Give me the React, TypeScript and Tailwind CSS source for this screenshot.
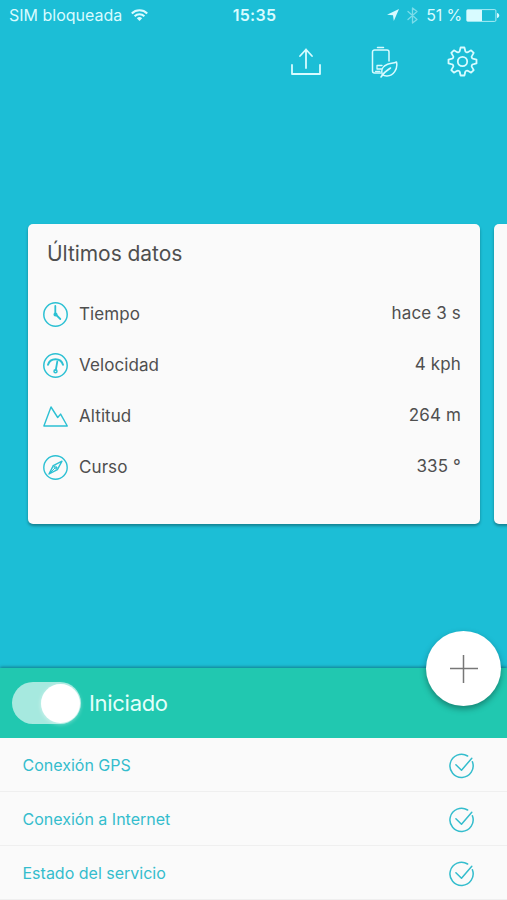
import type { ReactNode } from "react";

interface Reading {
  label: string;
  value: string;
  icon: ReactNode;
}

const stroke = {
  fill: "none",
  stroke: "currentColor",
  strokeLinecap: "round",
  strokeLinejoin: "round",
} as const;

function WifiIcon() {
  return (
    <svg width="17" height="12" viewBox="0 0 17 12" fill="none" stroke="currentColor" strokeWidth="2.1">
      <path d="M.8 4.4a10.9 10.9 0 0 1 15.4 0" />
      <path d="M3.6 7.3a7 7 0 0 1 9.8 0" />
      <path d="M8.5 12 5.8 9.3a3.8 3.8 0 0 1 5.4 0Z" fill="currentColor" stroke="none" />
    </svg>
  );
}

function LocationIcon() {
  return (
    <svg width="12" height="12" viewBox="0 0 12 12" fill="currentColor">
      <path d="M12 0 6.8 12 6 6.2 0 5.7Z" />
    </svg>
  );
}

function BluetoothIcon() {
  return (
    <svg width="11" height="17" viewBox="0 0 11 17" {...stroke} strokeWidth="1.3">
      <path d="m1 4.5 9 8L5.5 16V1L10 4.5l-9 8" />
    </svg>
  );
}

function BatteryIcon() {
  return (
    <svg width="34" height="13" viewBox="0 0 34 13" fill="none">
      <rect x=".6" y=".6" width="29.3" height="11.8" rx="1.2" stroke="currentColor" strokeOpacity=".75" />
      <path d="M1 1h15v11H1z" fill="currentColor" />
      <path d="M31 4c3 .5 3 4.5 0 5Z" fill="currentColor" />
    </svg>
  );
}

function UploadIcon() {
  return (
    <svg width="30" height="28" viewBox="0 0 30 28" {...stroke} strokeWidth="1.8">
      <path d="M1 17v9h28v-9" />
      <path d="M15 20V1.5M9 8l6-6.5L21 8" />
    </svg>
  );
}

function EcoIcon() {
  return (
    <svg width="27" height="32" viewBox="0 0 27 32" {...stroke} strokeWidth="1.5">
      <path d="M6.5 1.5h6" />
      <path d="M9.5 27h-6a2 2 0 0 1-2-2V6a2 2 0 0 1 2-2H16a2 2 0 0 1 2 2v9" />
      <path d="M11 19.5H6V23h4.500M4.500 25.300H9" strokeWidth="1.3" />
      <path d="M11.300 28.500c-1.500-4.500.5-8.500 5.300-10.300 3-1.200 6-.6 8.900-2.200 1.600 7-3.200 14.200-9.700 14-1.800-.1-3.300-.5-4.500-1.500Z" />
      <path d="M10 31c2.500-4 5.500-6.500 9.500-9" />
    </svg>
  );
}

function GearIcon() {
  return (
    <svg width="31" height="31" viewBox="-15.5 -15.5 31 31" {...stroke} strokeWidth="1.8">
      <path d="M-2.6-11.2-1.9-14H1.900L2.600-11.2A2 2 0 0 0 6.1-9.800L8.600-11.2 11.200-8.600 9.800-6.100A2 2 0 0 0 11.200-2.600L14-1.900V1.900L11.200 2.600A2 2 0 0 0 9.800 6.100L11.200 8.600 8.600 11.200 6.100 9.800A2 2 0 0 0 2.600 11.200L1.900 14H-1.900L-2.600 11.200A2 2 0 0 0-6.100 9.800L-8.600 11.200-11.200 8.600-9.800 6.100A2 2 0 0 0-11.200 2.600L-14 1.900V-1.900L-11.200-2.600A2 2 0 0 0-9.800-6.100L-11.200-8.600-8.600-11.200-6.100-9.800A2 2 0 0 0-2.600-11.2Z" />
      <circle r="4.7" />
    </svg>
  );
}

function ClockIcon() {
  return (
    <svg width="26" height="26" viewBox="0 0 26 26" {...stroke} strokeWidth="1.5">
      <circle cx="12.5" cy="12.5" r="11.7" />
      <path d="M12.3 4v8l5 5" strokeWidth="1.8" />
      <circle cx="12.5" cy="12.5" r="1.3" />
    </svg>
  );
}

function SpeedIcon() {
  return (
    <svg width="26" height="26" viewBox="0 0 26 26" {...stroke} strokeWidth="1.5">
      <circle cx="12.5" cy="12.5" r="11.7" />
      <path d="M5 11.8a7.8 7.8 0 0 1 15 0" strokeWidth="2" />
      <path d="m14.3 8.500-1.500 8.500" strokeWidth="1.8" />
      <circle cx="12.5" cy="18.2" r="1.5" />
    </svg>
  );
}

function MountainIcon() {
  return (
    <svg width="26" height="26" viewBox="0 0 26 26" {...stroke} strokeWidth="1.4">
      <path d="M.9 22 8 3l6.700 10.500 2.900-3.400L24.300 22Z" />
    </svg>
  );
}

function CompassIcon() {
  return (
    <svg width="26" height="26" viewBox="0 0 26 26" {...stroke} strokeWidth="1.4">
      <circle cx="12.5" cy="12.5" r="11.7" />
      <path d="m19 6.200-4.600 8.500-8.300 4.200 4.200-8.300Z" />
      <path d="m10.300 10.600 4.100 4.100M6.100 18.900l6-6" strokeWidth="1" />
      <circle cx="12.5" cy="12.5" r="1.3" strokeWidth="1" />
    </svg>
  );
}

function CheckIcon() {
  return (
    <svg width="26" height="26" viewBox="0 0 26 26" {...stroke} strokeWidth="1.5">
      <path d="M18.600 3A11.600 11.600 0 1 0 23.400 8.800" />
      <path d="m6.900 11.700 5.600 5.600L22.800 5.200" />
    </svg>
  );
}

const readings: Reading[] = [
  { label: "Tiempo", value: "hace 3 s", icon: <ClockIcon /> },
  { label: "Velocidad", value: "4 kph", icon: <SpeedIcon /> },
  { label: "Altitud", value: "264 m", icon: <MountainIcon /> },
  { label: "Curso", value: "335 °", icon: <CompassIcon /> },
];

const services = ["Conexión GPS", "Conexión a Internet", "Estado del servicio"];

function StatusBar() {
  return (
    <div className="grid h-[30px] grid-cols-3 items-center pr-[7px] pl-[9px] text-[16px] text-[#d8fbff]">
      <div className="flex items-center gap-[9px]">
        <span className="whitespace-nowrap">SIM bloqueada</span>
        <WifiIcon />
      </div>
      <span className="text-center font-semibold tracking-[0.3px]">15:35</span>
      <div className="flex items-center justify-end">
        <LocationIcon />
        <span className="mr-[8px] ml-[8px] opacity-50">
          <BluetoothIcon />
        </span>
        <span className="mr-[4px] tracking-[-0.2px] whitespace-nowrap">51 %</span>
        <BatteryIcon />
      </div>
    </div>
  );
}

function ReadingsCard() {
  return (
    <section className="h-[300px] w-[452px] shrink-0 rounded-[5px] bg-[#fafafa] pr-[19px] pl-[15px] text-[#4f4f4f] shadow-[0_2px_3px_rgba(0,0,0,0.32)]">
      <h2 className="h-[65px] pt-[14px] pl-[4px] text-[21px] leading-[32px] tracking-[-0.05px]">Últimos datos</h2>
      <ul>
        {readings.map((reading) => (
          <li key={reading.label} className="flex h-[51px] items-center text-[17px]">
            <span className="text-[#2cc0d3]">{reading.icon}</span>
            <span className="ml-[10px] flex-1 tracking-[0.08px]">{reading.label}</span>
            <span className="pb-[2px] tracking-[0.15px]">{reading.value}</span>
          </li>
        ))}
      </ul>
    </section>
  );
}

export default function App() {
  return (
    <div className="flex h-[900px] w-[507px] flex-col overflow-hidden bg-[#1cbed6] font-['Inter','Liberation_Sans',sans-serif]">
      <StatusBar />
      <header className="flex h-[64px] items-center justify-end pr-[29px] pb-px text-[#d8fbff]">
        <button className="mr-[50px]">
          <UploadIcon />
        </button>
        <button className="mr-[49px]">
          <EcoIcon />
        </button>
        <button>
          <GearIcon />
        </button>
      </header>

      <main className="mt-[130px] flex flex-1 gap-[14px] pl-[28px]">
        <ReadingsCard />
        <section className="h-[300px] w-[452px] shrink-0 rounded-[5px] bg-[#fafafa] shadow-[0_2px_3px_rgba(0,0,0,0.32)]" />
      </main>

      <footer className="relative">
        <div className="flex h-[70px] items-center bg-[#21c8b0] pl-[12px] shadow-[0_-1px_3px_rgba(0,0,0,0.35)]">
          <span className="flex h-[42px] w-[69px] items-center justify-end rounded-full bg-[#a6e9df] pr-px">
            <span className="size-[39px] rounded-full bg-white shadow-[0_1px_4px_rgba(255,255,255,0.5)]" />
          </span>
          <span className="ml-[8px] text-[22px] tracking-[-0.3px] text-[#e4fffa]">Iniciado</span>
        </div>
        <ul className="bg-[#fafafa] text-[16px] text-[#34bdcd]">
          {services.map((service) => (
            <li
              key={service}
              className="flex h-[54px] items-center justify-between border-b border-[#efefef] pr-[32px] pl-[22.5px]"
            >
              <span>{service}</span>
              <span className="pt-[2px]">
                <CheckIcon />
              </span>
            </li>
          ))}
        </ul>
        <button className="absolute -top-[37px] right-[6px] flex size-[75px] items-center justify-center rounded-full bg-white text-[#777] shadow-[0_3px_6px_rgba(0,0,0,0.35)]">
          <svg width="28" height="28" viewBox="0 0 28 28" stroke="currentColor" strokeWidth="1.5">
            <path d="M13.5 0v28M0 13.5h28" />
          </svg>
        </button>
      </footer>
    </div>
  );
}
